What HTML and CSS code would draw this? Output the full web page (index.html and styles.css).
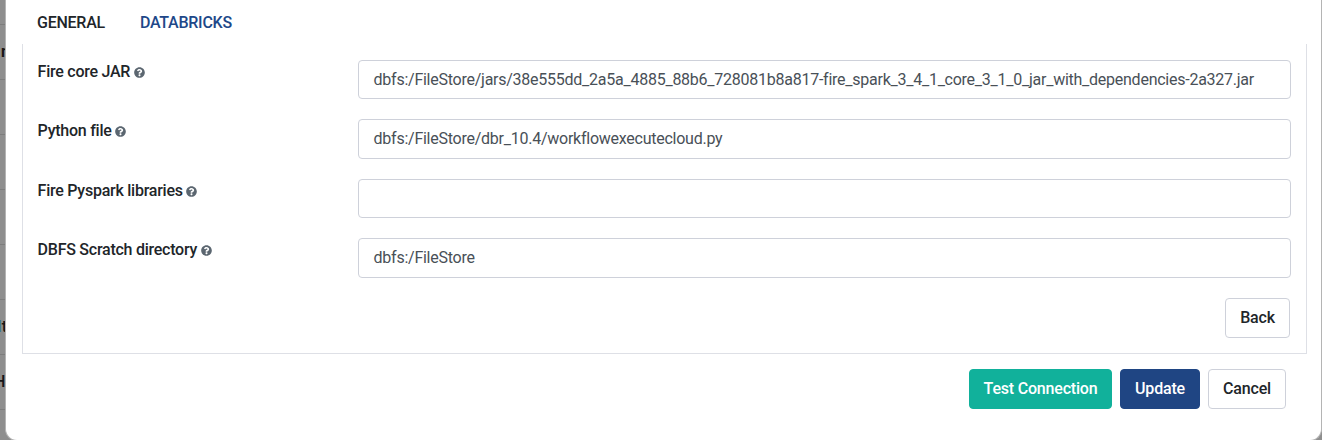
FILE: index.html
```html
<!DOCTYPE html>
<html lang="en">
<head>
<meta charset="utf-8">
<title>Edit Connection</title>
<link rel="stylesheet" href="styles.css">
</head>
<body>
<svg class="defs" width="0" height="0">
  <symbol id="help" viewBox="0 0 512 512"><path fill="#5b6670" d="M504 256c0 137-111 248-248 248S8 393 8 256 119 8 256 8s248 111 248 248zM262.700 90c-54.500 0-89.300 23-116.500 63.800-3.500 5.300-2.400 12.400 2.700 16.300l34.700 26.300c5.200 3.900 12.600 3 16.700-2.100 17.900-22.700 30.100-35.800 57.300-35.800 20.400 0 45.700 13.100 45.700 33 0 15-12.400 22.700-32.500 34C247.100 238.500 216 254.900 216 296v4c0 6.600 5.400 12 12 12h56c6.600 0 12-5.400 12-12v-1.300c0-28.500 83.200-29.600 83.200-106.700 0-58-60.200-102-116.500-102zM256 338c-25.400 0-46 20.600-46 46s20.600 46 46 46 46-20.600 46-46-20.600-46-46-46z"/></symbol>
</svg>
<div class="backdrop">
  <div class="line first"></div>
  <div class="line bold n">n</div>
  <div class="line"></div>
  <div class="line"></div>
  <div class="line"></div>
  <div class="line"></div>
  <div class="line t"><span class="link">l</span>t</div>
  <div class="line h">H</div>
</div>
<main class="modal">
  <nav class="tabs">
    <a class="tab">GENERAL</a>
    <a class="tab active">DATABRICKS</a>
  </nav>
  <section class="panel">
    <div class="row">
      <label>Fire core JAR <svg class="help"><use href="#help"/></svg></label>
      <div class="field">dbfs:/FileStore/jars/38e555dd_2a5a_4885_88b6_728081b8a817-fire_spark_3_4_1_core_3_1_0_jar_with_dependencies-2a327.jar</div>
    </div>
    <div class="row">
      <label>Python file <svg class="help"><use href="#help"/></svg></label>
      <div class="field">dbfs:/FileStore/dbr_10.4/workflowexecutecloud.py</div>
    </div>
    <div class="row">
      <label>Fire Pyspark libraries <svg class="help"><use href="#help"/></svg></label>
      <div class="field"></div>
    </div>
    <div class="row">
      <label>DBFS Scratch directory <svg class="help"><use href="#help"/></svg></label>
      <div class="field">dbfs:/FileStore</div>
    </div>
    <div class="back"><button class="btn">Back</button></div>
  </section>
  <footer class="actions">
    <button class="btn test">Test Connection</button>
    <button class="btn update">Update</button>
    <button class="btn cancel">Cancel</button>
  </footer>
</main>
</body>
</html>
```
FILE: styles.css
```css
* { box-sizing: border-box; }
body {
  margin: 0;
  height: 440px;
  overflow: hidden;
  position: relative;
  background: #8e8e8e;
  font-family: Roboto, sans-serif;
  font-size: 16px;
  letter-spacing: -0.25px;
  color: #212529;
}
.defs { position: absolute; }
.backdrop { width: 5px; overflow: hidden; }
.line {
  height: 55px;
  border-bottom: 1px solid #7d7d7d;
  line-height: 54px;
  white-space: nowrap;
  color: #161616;
}
.line.first { height: 25px; }
.bold { font-weight: 700; }
.n { padding-left: 1px; }
.t { text-indent: -2px; font-weight: 500; }
.h { text-indent: -6px; font-weight: 500; }
.link { color: #3f7790; font-weight: 400; }
.modal {
  position: absolute;
  top: -20px;
  left: 5px;
  width: 1317px;
  height: 461px;
  padding: 20px 14px 0 16px;
  background: #fff;
  border: 1px solid #b4b4b4;
  border-top: 0;
  border-radius: 0 0 12px 12px;
}
.tabs { display: flex; gap: 35px; height: 44px; padding-left: 15px; }
.tab { font-weight: 500; line-height: 46px; color: #212529; }
.tab.active { color: #204788; }
.panel {
  height: 310px;
  padding: 16px 15px 0 14.600px;
  border: 1px solid #dee0e6;
  border-top: 0;
}
.row { display: flex; height: 59.4px; }
label {
  flex: 0 0 320.400px;
  font-weight: 500;
  line-height: 24px;
  white-space: nowrap;
}
.help { width: 11px; height: 11px; vertical-align: -1px; }
.field {
  flex: 1;
  min-width: 0;
  height: 39.400px;
  padding: 0 14.600px;
  border: 1px solid #ced1da;
  border-radius: 4px;
  color: #495057;
  line-height: 38px;
  white-space: nowrap;
}
.back { display: flex; justify-content: flex-end; padding-right: 1px; }
.btn {
  height: 40px;
  padding: 0;
  width: 65px;
  border: 1px solid #ced1da;
  border-radius: 4px;
  background: #fff;
  font: 500 16px/38px Roboto, sans-serif;
  letter-spacing: -0.2px;
  color: #212529;
}
.actions { display: flex; justify-content: flex-end; gap: 8px; padding: 15px 21px 0 0; }
.test { width: 143px; background: #11b19b; border-color: #11b19b; color: #fff; }
.update { width: 80px; background: #1f4583; border-color: #1f4583; color: #fff; }
.cancel { width: 78px; }
```
